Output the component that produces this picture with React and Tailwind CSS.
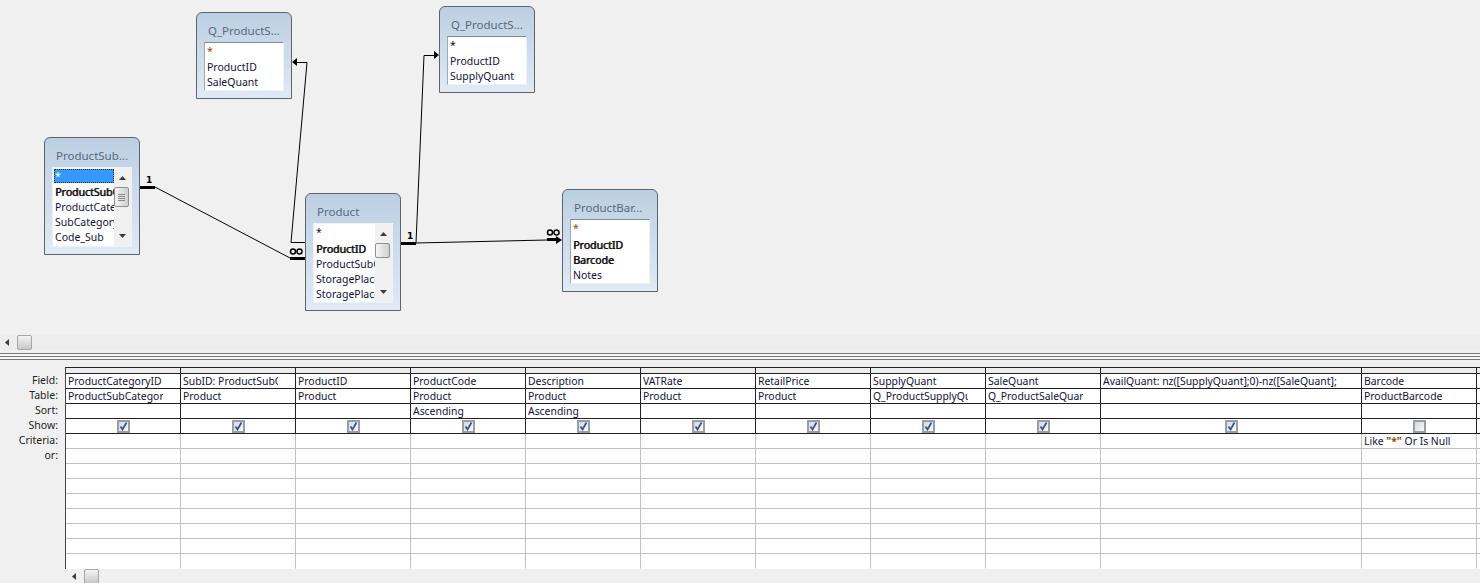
const columns = [
  { field: 'ProductCategoryID', table: 'ProductSubCategory', show: true },
  { field: 'SubID: ProductSubCategoryID', table: 'Product', show: true },
  { field: 'ProductID', table: 'Product', show: true },
  { field: 'ProductCode', table: 'Product', sort: 'Ascending', show: true },
  { field: 'Description', table: 'Product', sort: 'Ascending', show: true },
  { field: 'VATRate', table: 'Product', show: true },
  { field: 'RetailPrice', table: 'Product', show: true },
  { field: 'SupplyQuant', table: 'Q_ProductSupplyQuant', show: true },
  { field: 'SaleQuant', table: 'Q_ProductSaleQuant', show: true },
  { field: 'AvailQuant: nz([SupplyQuant];0)-nz([SaleQuant];', show: true },
  { field: 'Barcode', table: 'ProductBarcode', show: false, criteria: true },
  { show: null },
]

const labels = ['Field:', 'Table:', 'Sort:', 'Show:', 'Criteria:', 'or:']

function Arrow({ dir }) {
  const points = { up: '0,4 7,4 3.5,0', down: '0,0 7,0 3.5,4', left: '4,0 4,7 0,3.5' }
  return (
    <svg width={dir === 'left' ? 4 : 7} height={dir === 'left' ? 7 : 4} className="block">
      <polygon points={points[dir]} fill="#3c3c3c" />
    </svg>
  )
}

function ListScrollbar({ grip }) {
  return (
    <div className="w-[17px] shrink-0 bg-[#f0f0f0] flex flex-col items-center justify-between py-[8px] relative">
      <Arrow dir="up" />
      <Arrow dir="down" />
      <div className={`absolute left-0 top-[19px] w-[15px] rounded-[2px] border border-[#8e8f8f] bg-gradient-to-r from-[#f6f6f6] to-[#cfcfcf] flex flex-col items-center justify-center gap-[1px] ${grip ? 'h-[20px]' : 'h-[15px]'}`}>
        {grip && [0, 1, 2, 3].map((i) => <div key={i} className="w-[7px] h-[1px] bg-[#8a8a8a]" />)}
      </div>
    </div>
  )
}

function TableBox({ title, rows, scroll, grip, wide, className }) {
  return (
    <div className={`absolute w-[96px] flex flex-col rounded-t-[6px] border border-[#5d6470] bg-gradient-to-b from-[#bccfe2] to-[#dfeaf5] px-[7px] pb-[7px] ${className}`}>
      <div className="h-[29px] pt-[10px] pl-[4px] text-[11.5px] leading-[16px] text-[#56697e] whitespace-nowrap">{title}</div>
      <div className={`border flex bg-white ${scroll ? 'border-[#eef3f8] h-[80px]' : 'border-t-[#7f8a95] border-l-[#a0a8b0] border-r-[#eef3f8] border-b-[#eef3f8]'}`}>
        <div className="flex-1 min-w-0 overflow-hidden pt-[1px]">
          {rows.map((r, i) => (
            <div
              key={r.name}
              className={`leading-[15px] text-[10.5px] whitespace-nowrap overflow-hidden ${i === 0 ? `h-[14px] ${wide ? 'mb-[3px]' : 'mb-[2px]'}` : 'h-[15px]'} ${r.bold ? 'text-[#111] [text-shadow:0.7px_0_0_#111]' : 'text-[#10103a]'} ${r.star ? 'text-[#a04000]' : ''} ${r.selected ? 'ml-[1px] pl-[1px] bg-[#3399ff] text-white outline-1 outline-dotted outline-[#333] -outline-offset-1' : 'pl-[2px]'}`}
            >
              {r.name}
            </div>
          ))}
        </div>
        {scroll && <ListScrollbar grip={grip} />}
      </div>
    </div>
  )
}

function Connectors() {
  return (
    <svg width="700" height="335" className="absolute left-0 top-0" fill="none" stroke="#000">
      <g shapeRendering="crispEdges" strokeWidth="3">
        <path d="M140 187.5H155" />
        <path d="M290 258.5H305" />
        <path d="M401 243.5H416" />
        <path d="M547 239.5H558" />
      </g>
      <path d="M155 187L290 258" />
      <path d="M305 242.5H291L307 62.5H296" />
      <path d="M416 243L424 55.5H435" />
      <path d="M416 243L547 240" />
      <polygon points="292,62 297,58 297,66" fill="#000" stroke="none" />
      <polygon points="439,55 434,51 434,59" fill="#000" stroke="none" />
      <polygon points="562,240 556,236 556,244" fill="#000" stroke="none" />
      <text x="146" y="183" fontSize="9" fontWeight="700" fill="#000" stroke="none" fontFamily="'DejaVu Sans', sans-serif">1</text>
      <text x="407" y="239" fontSize="9" fontWeight="700" fill="#000" stroke="none" fontFamily="'DejaVu Sans', sans-serif">1</text>
      <g strokeWidth="1.5">
        <circle cx="293" cy="251.5" r="2.5" />
        <circle cx="299.5" cy="251.5" r="2.5" />
        <circle cx="550" cy="232.5" r="2.5" />
        <circle cx="556.5" cy="232.5" r="2.5" />
      </g>
    </svg>
  )
}

function Check({ on }) {
  return (
    <div className="w-[13px] h-[13px] border-2 border-[#9a9da3] bg-gradient-to-br from-[#d5d8de] to-[#fafafa] flex items-center justify-center">
      {on && (
        <svg width="9" height="9" viewBox="0 0 9 9" fill="none" className="shrink-0">
          <path d="M1.5 4.5L3.5 7.5L7.5 0.5" stroke="#2f4f9f" strokeWidth="1.7" />
        </svg>
      )}
    </div>
  )
}

function Cell({ dark, last, children }) {
  return (
    <div className={`h-[15px] bg-white border-r border-b pl-[2px] pr-[17px] leading-[14px] text-[10.4px] text-[#10103a] ${dark ? 'border-[#222]' : 'border-[#c0c0c0]'} ${last ? 'border-b-transparent' : ''}`}>
      <div className="overflow-hidden whitespace-nowrap h-[14px]">{children}</div>
    </div>
  )
}

function HScrollThumb() {
  return <div className="w-[15px] h-[15px] rounded-[2px] border border-[#a5a5a5] bg-gradient-to-b from-[#f4f4f4] to-[#c8c8c8]" />
}

export default function App() {
  const rowCount = 13
  return (
    <div className="w-[1480px] h-[583px] overflow-hidden bg-[#f0f0f0] flex flex-col font-['Noto_Sans','Liberation_Sans',sans-serif] text-black">
      {/* relationship canvas */}
      <div className="relative h-[335px] shrink-0">
        <Connectors />
        <TableBox
          className="left-[196px] top-[12px]"
          title="Q_ProductS..."
          rows={[{ name: '*', star: true }, { name: 'ProductID' }, { name: 'SaleQuant' }]}
        />
        <TableBox
          className="left-[439px] top-[6px]"
          title="Q_ProductS..."
          rows={[{ name: '*' }, { name: 'ProductID' }, { name: 'SupplyQuant' }]}
        />
        <TableBox
          className="left-[44px] top-[137px]"
          title="ProductSub..."
          scroll
          grip
          rows={[
            { name: '*', selected: true },
            { name: 'ProductSubCategoryID', bold: true },
            { name: 'ProductCategoryID' },
            { name: 'SubCategory' },
            { name: 'Code_Sub' },
          ]}
        />
        <TableBox
          className="left-[305px] top-[193px]"
          title="Product"
          scroll
          wide
          rows={[
            { name: '*' },
            { name: 'ProductID', bold: true },
            { name: 'ProductSubCategoryID' },
            { name: 'StoragePlace1' },
            { name: 'StoragePlace2' },
          ]}
        />
        <TableBox
          className="left-[562px] top-[189px]"
          title="ProductBar..."
          wide
          rows={[
            { name: '*', star: true },
            { name: 'ProductID', bold: true },
            { name: 'Barcode', bold: true },
            { name: 'Notes' },
          ]}
        />
      </div>

      {/* canvas scrollbar */}
      <div className="h-[15px] shrink-0 flex items-center pl-[5px] gap-[8px] bg-[#ededed]">
        <Arrow dir="left" />
        <HScrollThumb />
      </div>

      {/* splitter */}
      <div className="h-[10px] shrink-0 pt-[3px]">
        <div className="h-[7px] border-y border-[#777] bg-[#f8f8f8] flex flex-col justify-center">
          <div className="h-[1px] bg-[#777]" />
        </div>
      </div>

      {/* query grid */}
      <div className="flex h-[223px] shrink-0 pt-[7px]">
        <div className="w-[65px] shrink-0 pt-[6px] pr-[7px] text-right text-[10.5px] leading-[15px] text-[#222]">
          {labels.map((l) => (
            <div key={l} className="h-[15px]">{l}</div>
          ))}
        </div>
        <div className="flex-1 min-w-0 overflow-hidden flex flex-col">
          <div className="grid grid-cols-[repeat(9,115px)_261px_115px_115px] border-l border-l-[#444] border-t border-t-[#222] w-[1422px]">
            {columns.map((c, i) => (
              <div key={i} className="h-[6px] border-r border-b border-[#222] bg-[#ececec]" />
            ))}
            {Array.from({ length: rowCount }).map((_, row) =>
              columns.map((c, i) => {
                const dark = row < 4
                return (
                  <Cell key={`${row}-${i}`} dark={dark} last={row === rowCount - 1}>
                    {row === 0 && c.field}
                    {row === 1 && c.table}
                    {row === 2 && c.sort}
                    {row === 3 && c.show !== null && (
                      <div className="flex justify-center h-[14px] items-center ml-[15px]">
                        <Check on={c.show} />
                      </div>
                    )}
                    {row === 4 && c.criteria && (
                      <>Like <span className="text-[#a04000] font-bold">"*"</span> Or Is Null</>
                    )}
                  </Cell>
                )
              })
            )}
          </div>
          <div className="h-[15px] shrink-0 flex items-center pl-[7px] gap-[8px] bg-[#f0f0f0]">
            <Arrow dir="left" />
            <HScrollThumb />
          </div>
        </div>
      </div>
    </div>
  )
}
